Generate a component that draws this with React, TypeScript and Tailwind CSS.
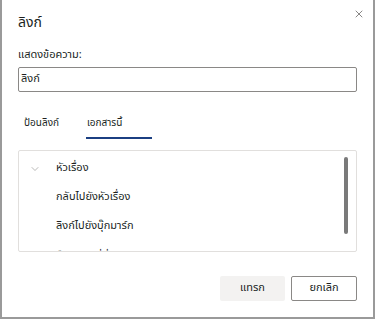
import { X, ChevronDown, ChevronRight } from "lucide-react";

const FONT = { fontFamily: '"Leelawadee UI", Tahoma, "Noto Sans Thai", "Noto Sans", "DejaVu Sans", sans-serif' };

function Row({ text }: { text: string }) {
  return (
    <div className="flex h-[29px] items-center pl-[37px] text-[11px] text-[#201f1e]">
      <span>{text}</span>
    </div>
  );
}

export default function App() {
  return (
    <div className="h-[319px] w-[375px] overflow-hidden bg-[#9a9a9a] pl-[2px] pr-[2px] pb-[2px]" style={FONT}>
      <div className="relative flex h-full flex-col bg-white px-[16px]">
        <button className="absolute right-[8px] top-[8px] text-[#605e5c]">
          <X className="h-[12px] w-[12px]" strokeWidth={1.5} />
        </button>

        <div className="pt-[14px] text-[14px] leading-[18px] text-[#201f1e]">ลิงก์</div>

        <div className="mt-[16px] text-[11px] leading-[14px] text-[#201f1e]">แสดงข้อความ:</div>
        <div className="mt-[5px] flex h-[25px] items-center rounded-[2px] border border-[#8a8886] px-[2px] text-[11px] text-[#201f1e]">
          ลิงก์
        </div>

        <div className="mt-[24px] flex text-[10px] text-[#201f1e]">
          <div className="pl-[6px] pr-[6px] pb-[8px]">ป้อนลิงก์</div>
          <div className="ml-[21px] flex flex-col">
            <div className="pb-[6px] pl-[1px]">เอกสารนี้</div>
            <div className="h-[2px] w-[66px] bg-[#1b3f82]" />
          </div>
        </div>

        <div className="relative mt-[11px] h-[102px] overflow-hidden rounded-[2px] border border-[#e1dfdd]">
          <div className="pt-[3px]">
            <div className="flex h-[29px] items-center text-[11px] text-[#201f1e]">
              <ChevronDown className="ml-[10px] h-[12px] w-[12px] text-[#8a8886]" strokeWidth={1.2} />
              <span className="ml-[15px]">หัวเรื่อง</span>
            </div>
            <Row text="กลับไปยังหัวเรื่อง" />
            <Row text="ลิงก์ไปยังบุ๊กมาร์ก" />
            <div className="flex h-[29px] items-center pt-[4px] text-[11px] text-[#201f1e]">
              <ChevronRight className="ml-[10px] h-[12px] w-[12px] text-[#8a8886]" strokeWidth={1.2} />
              <span className="ml-[15px]">บุ๊กมาร์ก ที่นี่</span>
            </div>
          </div>
          <div className="absolute right-[8px] top-[6px] h-[77px] w-[4px] rounded-full bg-[#7a7a7a]" />
        </div>

        <div className="mt-[24px] flex justify-end gap-[6px]">
          <button className="h-[25px] w-[65px] rounded-[2px] bg-[#f3f2f1] text-[11px] text-[#201f1e]">แทรก</button>
          <button className="h-[25px] w-[66px] rounded-[2px] border border-[#8a8886] bg-white text-[11px] text-[#201f1e]">
            ยกเลิก
          </button>
        </div>
      </div>
    </div>
  );
}
